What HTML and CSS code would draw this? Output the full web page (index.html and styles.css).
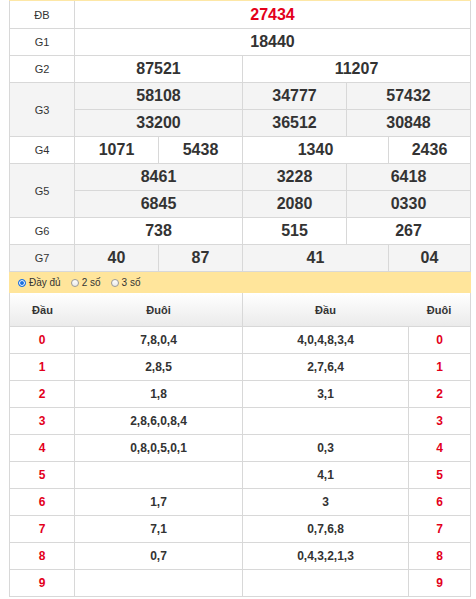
FILE: index.html
```html
<!DOCTYPE html>
<html lang="vi">
<head>
<meta charset="utf-8">
<title>Kết quả</title>
<link rel="stylesheet" href="styles.css">
</head>
<body>
<div class="wrap">
  <div class="kq">
    <div class="c lbl">ĐB</div><div class="c s5 red">27434</div>
    <div class="c lbl">G1</div><div class="c s5">18440</div>
    <div class="c lbl">G2</div><div class="c s2">87521</div><div class="c s3">11207</div>
    <div class="c lbl alt r2">G3</div><div class="c s2 alt">58108</div><div class="c alt">34777</div><div class="c s2 alt">57432</div>
    <div class="c s2 alt">33200</div><div class="c alt">36512</div><div class="c s2 alt">30848</div>
    <div class="c lbl">G4</div><div class="c">1071</div><div class="c">5438</div><div class="c s2">1340</div><div class="c">2436</div>
    <div class="c lbl alt r2">G5</div><div class="c s2 alt">8461</div><div class="c alt">3228</div><div class="c s2 alt">6418</div>
    <div class="c s2 alt">6845</div><div class="c alt">2080</div><div class="c s2 alt">0330</div>
    <div class="c lbl">G6</div><div class="c s2">738</div><div class="c">515</div><div class="c s2">267</div>
    <div class="c lbl alt">G7</div><div class="c alt">40</div><div class="c alt">87</div><div class="c s2 alt">41</div><div class="c alt">04</div>
  </div>
  <div class="opts">
    <label class="opt"><span class="radio on"></span>Đầy đủ</label>
    <label class="opt"><span class="radio"></span>2 số</label>
    <label class="opt"><span class="radio"></span>3 số</label>
  </div>
  <div class="lt">
    <div class="hd l"><span>Đầu</span><span>Đuôi</span></div>
    <div class="hd r"><span>Đầu</span><span>Đuôi</span></div>

    <div class="e d">0</div><div class="e">7,8,0,4</div><div class="e">4,0,4,8,3,4</div><div class="e d">0</div>
    <div class="e d">1</div><div class="e">2,8,5</div><div class="e">2,7,6,4</div><div class="e d">1</div>
    <div class="e d">2</div><div class="e">1,8</div><div class="e">3,1</div><div class="e d">2</div>
    <div class="e d">3</div><div class="e">2,8,6,0,8,4</div><div class="e"></div><div class="e d">3</div>
    <div class="e d">4</div><div class="e">0,8,0,5,0,1</div><div class="e">0,3</div><div class="e d">4</div>
    <div class="e d">5</div><div class="e"></div><div class="e">4,1</div><div class="e d">5</div>
    <div class="e d">6</div><div class="e">1,7</div><div class="e">3</div><div class="e d">6</div>
    <div class="e d">7</div><div class="e">7,1</div><div class="e">0,7,6,8</div><div class="e d">7</div>
    <div class="e d">8</div><div class="e">0,7</div><div class="e">0,4,3,2,1,3</div><div class="e d">8</div>
    <div class="e d">9</div><div class="e"></div><div class="e"></div><div class="e d">9</div>
  </div>
</div>
</body>
</html>
```
FILE: styles.css
```css
html, body {
  margin: 0;
  padding: 0;
  background: #fff;
}
body {
  font-family: "Liberation Sans", Arial, sans-serif;
  color: #333;
}
.wrap {
  width: 462px;
  margin-left: 9px;
}
.kq {
  display: grid;
  grid-template-columns: 64px 83px 83px 103px 41px 81px;
  grid-template-rows: 27px;
  grid-auto-rows: 26px;
  gap: 1px;
  background: #d8d8d8;
  padding: 0 1px 1px;
  border-top: 1px solid #fde7a6;
}
.c {
  background: #fff;
  display: flex;
  align-items: center;
  justify-content: center;
  font-size: 16px;
  font-weight: bold;
  color: #333;
}
.alt { background: #f4f4f4; }
.lbl {
  font-size: 11px;
  font-weight: normal;
}
.red { color: #e3001b; }
.s2 { grid-column: span 2; }
.s3 { grid-column: span 3; }
.s5 { grid-column: span 5; }
.r2 { grid-row: span 2; }

.opts {
  height: 21px;
  background: #ffe59b;
  display: flex;
  align-items: center;
  padding-left: 9px;
  font-size: 10px;
  color: #333;
}
.opt {
  display: flex;
  align-items: center;
  gap: 3px;
  margin-right: 10px;
}
.radio {
  width: 8px;
  height: 8px;
  box-sizing: border-box;
  border-radius: 50%;
  border: 1px solid #9a9a9a;
  background: linear-gradient(#fff, #e9e9e9);
}
.radio.on {
  border-color: #1a6fe0;
  background: #1a6fe0;
  box-shadow: inset 0 0 0 1px #fff;
}

.lt {
  display: grid;
  grid-template-columns: 64px 167px 165px 61px;
  grid-template-rows: 33px;
  grid-auto-rows: 26px;
  gap: 1px;
  background: #d8d8d8;
  padding: 0 1px 1px;
}
.hd {
  grid-column: span 2;
  display: grid;
  background: linear-gradient(#ffffff, #ebebeb);
  font-size: 11px;
  font-weight: bold;
  color: #333;
}
.hd.l { grid-template-columns: 65px 1fr; }
.hd.r { grid-template-columns: 1fr 62px; }
.hd span {
  display: flex;
  align-items: center;
  justify-content: center;
}
.e {
  background: #fff;
  display: flex;
  align-items: center;
  justify-content: center;
  font-size: 12px;
  font-weight: bold;
  color: #333;
}
.e.d { color: #e3001b; }
```
